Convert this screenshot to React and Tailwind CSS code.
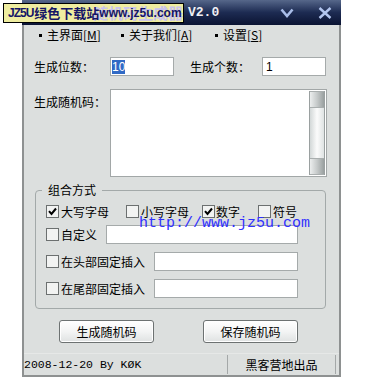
import React from 'react';

function Check({ checked }) {
    return (
        <span className="flex h-[13px] w-[13px] shrink-0 items-center justify-center border border-[#6c7070] bg-[#f2f3f2]">
            {checked && (
                <svg width="9" height="9" viewBox="0 0 9 9">
                    <path d="M1 4.2 L3.5 7 L8 1.5" fill="none" stroke="#000" strokeWidth="2" />
                </svg>
            )}
        </span>
    );
}

function Field({ className = '', children }) {
    return (
        <div className={'flex h-[19px] items-center border border-[#a5aaaa] bg-white font-["Liberation_Sans",sans-serif] text-[12px] ' + className}>
            {children}
        </div>
    );
}

function Btn({ children }) {
    return (
        <div className="flex h-[23px] w-[95px] items-center justify-center rounded-[3px] border border-[#6d7272] bg-gradient-to-b from-[#ffffff] via-[#f3f4f4] to-[#dfe2e2] shadow-[inset_0_0_0_1px_#ffffff]">
            {children}
        </div>
    );
}

function ScrollBtn() {
    return <div className="h-[17px] shrink-0 border-y border-[#a9aeae] bg-gradient-to-r from-[#eceeee] via-[#c6caca] to-[#9aa0a0]" />;
}

export default function App() {
    return (
        <div className="relative h-[377px] w-[375px] overflow-hidden bg-white font-['Noto_Sans_CJK_SC','Liberation_Sans',sans-serif] text-[12px] leading-[14px] text-black">
            <div className="ml-[22px] flex w-[319px] flex-col">
                {/* title bar */}
                <div className="flex h-[25px] items-center bg-gradient-to-b from-[#56678a] via-[#1d2b52] to-[#0b1433]">
                    <span className="ml-[9px] h-[13px] w-[13px] bg-[#d8b848]" />
                    <span className="ml-[49px] w-[90px] text-[15px] font-bold leading-[16px] text-[#dfe3f4]">随机码生成器</span>
                    <span className="ml-[5px] font-['Liberation_Mono',monospace] text-[13px] font-bold text-[#f0f0f4]">V2.0</span>
                    <svg className="ml-auto" width="14" height="10" viewBox="0 0 14 10">
                        <path d="M1.5 1.5 L7 8 L12.5 1.5" fill="none" stroke="#a9bde9" strokeWidth="2.6" />
                    </svg>
                    <svg className="ml-[24px] mr-[9px]" width="14" height="12" viewBox="0 0 14 12">
                        <path d="M1.5 1 L12.5 11 M12.5 1 L1.5 11" fill="none" stroke="#b3c6ef" strokeWidth="2.4" />
                    </svg>
                </div>

                {/* window body */}
                <div className="flex h-[352px] flex-col border-x-2 border-b-2 border-[#8e9191] bg-[#dcdfde]">
                    <div className="flex h-[20px] items-center pl-[15px]">
                        <div className="flex w-[82px] items-center">
                            <span className="h-[3px] w-[3px] bg-black" />
                            <span className="ml-[5px]">主界面[<u>M</u>]</span>
                        </div>
                        <div className="flex w-[94px] items-center">
                            <span className="h-[3px] w-[3px] bg-black" />
                            <span className="ml-[5px]">关于我们[<u>A</u>]</span>
                        </div>
                        <div className="flex items-center">
                            <span className="h-[3px] w-[3px] bg-black" />
                            <span className="ml-[5px]">设置[<u>S</u>]</span>
                        </div>
                    </div>

                    <div className="mt-[12px] flex h-[19px] items-center pl-[10px]">
                        <span className="w-[76px]">生成位数：</span>
                        <Field className="w-[64px] pl-[1px]">
                            <span className="bg-[#316ac5] leading-[14px] text-white">10</span>
                        </Field>
                        <span className="ml-[16px] w-[72px]">生成个数：</span>
                        <Field className="w-[64px] pl-[3px]">1</Field>
                    </div>

                    <div className="mt-[13px] flex pl-[10px]">
                        <span className="w-[76px] pt-[6px]">生成随机码：</span>
                        <div className="flex h-[88px] w-[217px] justify-end border border-[#a2a7a7] bg-white p-[1px]">
                            <div className="flex w-[16px] flex-col border-x border-[#9aa0a0]">
                                <ScrollBtn />
                                <div className="flex-1 bg-gradient-to-r from-[#d3d8d8] via-[#fbfbfb] to-[#dfe3e3]" />
                                <ScrollBtn />
                            </div>
                        </div>
                    </div>

                    {/* group box */}
                    <div className="relative mt-[13px] ml-[11px] w-[291px] rounded-[4px] border border-[#a3a9a9] pt-[13px] pb-[10px] pl-[10px]">
                        <span className="absolute -top-[8px] left-[6px] bg-[#dcdfde] px-[6px] leading-[14px]">组合方式</span>
                        <div className="flex h-[15px] items-center">
                            <div className="flex w-[80px] items-center">
                                <Check checked />
                                <span className="ml-[2px]">大写字母</span>
                            </div>
                            <div className="flex w-[76px] items-center">
                                <Check />
                                <span className="ml-[2px]">小写字母</span>
                            </div>
                            <div className="flex w-[56px] items-center">
                                <Check checked />
                                <span className="ml-[1px]">数字</span>
                            </div>
                            <div className="flex items-center">
                                <Check />
                                <span className="ml-[2px]">符号</span>
                            </div>
                        </div>
                        <div className="mt-[6px] flex h-[19px] items-center">
                            <div className="flex w-[60px] items-center">
                                <Check />
                                <span className="ml-[2px]">自定义</span>
                            </div>
                            <Field className="w-[192px]" />
                        </div>
                        <div className="mt-[8px] flex h-[19px] items-center">
                            <div className="flex w-[108px] items-center">
                                <Check />
                                <span className="ml-[2px]">在头部固定插入</span>
                            </div>
                            <Field className="w-[144px]" />
                        </div>
                        <div className="mt-[8px] flex h-[19px] items-center">
                            <div className="flex w-[108px] items-center">
                                <Check />
                                <span className="ml-[2px]">在尾部固定插入</span>
                            </div>
                            <Field className="w-[144px]" />
                        </div>
                    </div>

                    <div className="mt-[11px] flex pl-[35px]">
                        <Btn>生成随机码</Btn>
                        <div className="ml-[49px]">
                            <Btn>保存随机码</Btn>
                        </div>
                    </div>

                    {/* status bar */}
                    <div className="mt-[10px] flex h-[22px] items-stretch border-t border-[#e6e8e7]">
                        <div className="flex w-[203px] items-center font-['Liberation_Mono',monospace] text-[11.5px]">
                            2008-12-20 By KØK
                        </div>
                        <div className="my-[1px] flex w-[109px] items-center justify-center border-x border-[#a4a8a8]">
                            黑客营地出品
                        </div>
                    </div>
                </div>
            </div>

            {/* watermark overlays */}
            <div className="absolute left-[3px] top-[3px] flex h-[20px] w-[181px] items-center border border-black bg-[#efeda0] pl-[4px] font-['Liberation_Sans','Noto_Sans_CJK_SC',sans-serif] font-bold text-[#151566]">
                <span className="absolute left-[89px] top-[1px] text-[15px] font-bold leading-[16px] text-[#c9c3ee] font-['Noto_Sans_CJK_SC',sans-serif]">随机码生成器</span>
                <span className="relative text-[12px] tracking-[-1px]">JZ5U</span>
                <span className="relative ml-[1px] text-[13px] font-['Noto_Sans_CJK_SC',sans-serif] font-bold">绿色下载站</span>
                <span className="relative text-[12px]">www.jz5u.com</span>
            </div>
            <div className="absolute left-[139px] top-[216px] font-['Liberation_Mono',monospace] text-[15px] leading-[15px] text-[#3030ff]">
                http://www.jz5u.com
            </div>
        </div>
    );
}
